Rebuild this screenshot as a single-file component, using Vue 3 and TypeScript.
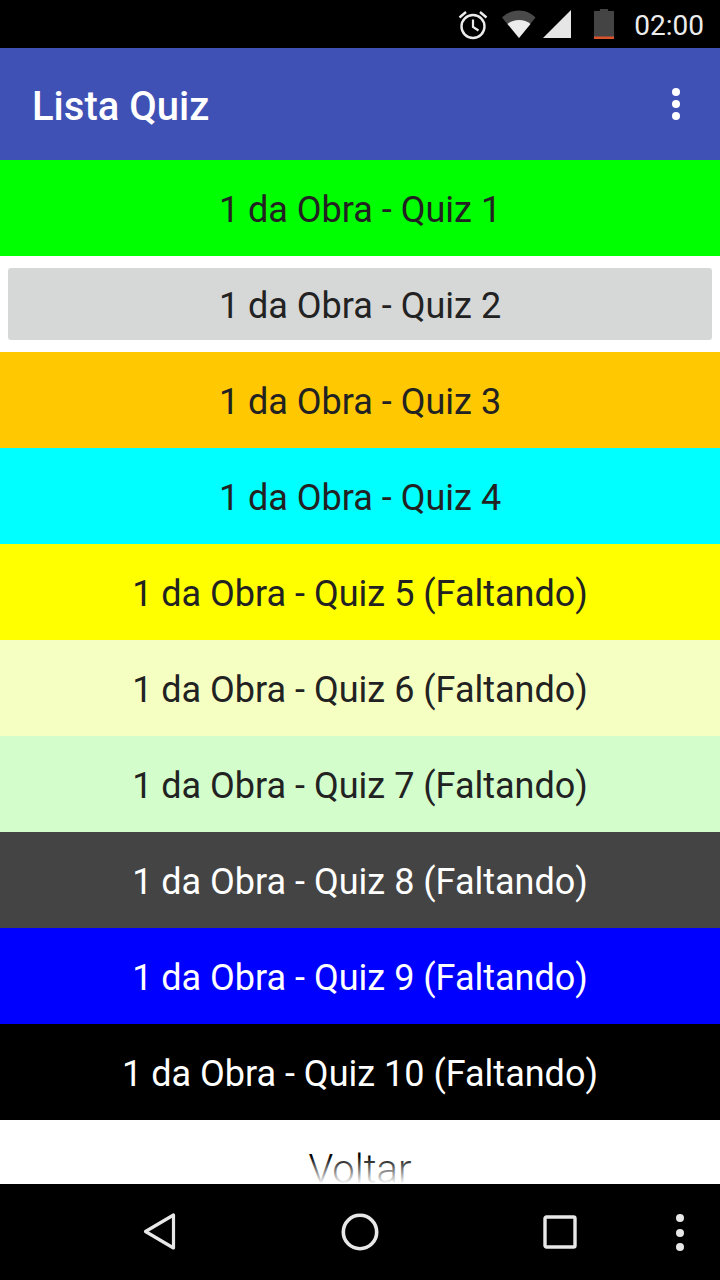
<script setup lang="ts">
interface Row { label: string; cls: string }
const rows: Row[] = [
  { label: '1 da Obra - Quiz 1', cls: 'green' },
  { label: '1 da Obra - Quiz 2', cls: 'plain' },
  { label: '1 da Obra - Quiz 3', cls: 'amber' },
  { label: '1 da Obra - Quiz 4', cls: 'cyan' },
  { label: '1 da Obra - Quiz 5 (Faltando)', cls: 'yellow' },
  { label: '1 da Obra - Quiz 6 (Faltando)', cls: 'paleyellow' },
  { label: '1 da Obra - Quiz 7 (Faltando)', cls: 'palegreen' },
  { label: '1 da Obra - Quiz 8 (Faltando)', cls: 'dark' },
  { label: '1 da Obra - Quiz 9 (Faltando)', cls: 'blue' },
  { label: '1 da Obra - Quiz 10 (Faltando)', cls: 'black' },
]
</script>

<template>
  <div class="screen">
    <header class="status">
      <svg class="st-alarm" width="32" height="32" viewBox="0 0 32 32" fill="none" stroke="#ececec">
        <circle cx="16" cy="17.5" r="11.5" stroke-width="2.4" />
        <path d="M16 10.5V18l5.5 3.5" stroke-width="2.2" />
        <path d="M2.5 8.5 9 3M29.500 8.500 23 3" stroke-width="2.4" />
      </svg>
      <svg class="st-wifi" width="36" height="28" viewBox="0 0 36 28">
        <path d="M18 28 1 7.500C5.500 3.300 11.500 0.500 18 0.500s12.500 2.800 16.500 7Z" fill="#4a4a4a" />
        <path d="M18 28 6.500 14C9.500 11.500 13.500 10 18 10s8.500 1.500 11.500 4Z" fill="#ececec" />
      </svg>
      <svg class="st-signal" width="30" height="30" viewBox="0 0 30 30">
        <path d="M1 29 29 1v28Z" fill="#e6e6e6" />
      </svg>
      <svg class="st-batt" width="20" height="30" viewBox="0 0 20 30">
        <path d="M6 0h8v2h6v28H0V2h6Z" fill="#444" />
        <rect x="0" y="27.500" width="20" height="2.500" fill="#d9532c" />
      </svg>
      <span class="clock">02:00</span>
    </header>

    <div class="appbar">
      <h1 class="title">Lista Quiz</h1>
      <div class="overflow"><i></i><i></i><i></i></div>
    </div>

    <main class="list">
      <button v-for="r in rows" :key="r.label" class="row" :class="r.cls">{{ r.label }}</button>
      <button class="row back">Voltar</button>
      <div class="fade"></div>
    </main>

    <footer class="nav">
      <svg class="nav-back" width="36" height="40" viewBox="0 0 36 40" fill="none" stroke="#e8e8e8" stroke-width="3.200" stroke-linejoin="round">
        <path d="M31.500 3V36L3.500 19.500Z" />
      </svg>
      <svg class="nav-home" width="38" height="38" viewBox="0 0 38 38" fill="none" stroke="#e8e8e8" stroke-width="3.600">
        <circle cx="19" cy="19" r="16.700" />
      </svg>
      <svg class="nav-recent" width="34" height="34" viewBox="0 0 34 34" fill="none" stroke="#e8e8e8" stroke-width="3.400" stroke-linejoin="round">
        <rect x="2" y="2" width="30" height="30" rx="1.500" />
      </svg>
      <div class="nav-more"><i></i><i></i><i></i></div>
    </footer>
  </div>
</template>

<style>
html, body { margin: 0; background: #000; }
</style>

<style scoped>
.screen {
  width: 720px;
  height: 1280px;
  display: flex;
  flex-direction: column;
  overflow: hidden;
  background: #fff;
  font-family: Roboto, "Liberation Sans", sans-serif;
}
.status {
  height: 48px;
  flex: none;
  background: #000;
  display: flex;
  align-items: center;
  justify-content: flex-end;
  padding-right: 16px;
  padding-top: 2px;
  box-sizing: border-box;
}
.st-alarm { margin-right: 12px; margin-top: -1px; }
.st-wifi { margin-right: 5px; margin-top: -2px; }
.st-signal { margin-right: 22px; margin-top: -2px; }
.st-batt { margin-right: 20px; margin-top: -2px; }
.clock { color: #ececec; font-size: 28px; line-height: 48px; margin-top: 2px; }
.appbar {
  height: 112px;
  flex: none;
  background: #3f51b5;
  display: flex;
  align-items: center;
  justify-content: space-between;
  padding: 0 40px 0 32px;
  box-sizing: border-box;
}
.title { margin: 6px 0 0; color: #fff; font-size: 40px; font-weight: 500; line-height: 100px; }
.overflow { display: flex; flex-direction: column; gap: 4px; }
.overflow i { width: 8px; height: 8px; border-radius: 50%; background: #fff; display: block; }
.list {
  position: relative;
  flex: 1;
  min-height: 0;
  overflow: hidden;
  display: flex;
  flex-direction: column;
}
.row {
  flex: none;
  height: 96px;
  width: 100%;
  border: 0;
  margin: 0;
  padding: 4px 0 0;
  font-family: inherit;
  font-size: 36px;
  color: #222;
  text-align: center;
  display: block;
}
.green { background: #00ff00; }
.plain {
  width: 704px;
  height: 72px;
  margin: 12px 8px;
  background: #d6d7d7;
  border-radius: 3px;
}
.amber { background: #ffc800; }
.cyan { background: #00ffff; }
.yellow { background: #ffff00; }
.paleyellow { background: #f6ffc2; }
.palegreen { background: #d3fdcb; }
.dark { background: #444444; color: #fff; }
.blue { background: #0000ff; color: #fff; }
.black { background: #000; color: #fff; }
.back { background: #fff; font-size: 40px; color: #000; font-weight: 300; padding: 2px 0 0; }
.fade {
  position: absolute;
  left: 0;
  right: 0;
  bottom: 0;
  height: 28px;
  background: linear-gradient(to bottom, rgba(255, 255, 255, 0), #fff);
}
.nav {
  height: 96px;
  flex: none;
  background: #000;
  position: relative;
  display: flex;
  align-items: center;
}
.nav-back { position: absolute; left: 142px; top: 28px; }
.nav-home { position: absolute; left: 341px; top: 29px; }
.nav-recent { position: absolute; left: 543px; top: 31px; }
.nav-more {
  position: absolute;
  left: 676px;
  top: 30px;
  display: flex;
  flex-direction: column;
  gap: 6.500px;
}
.nav-more i { width: 8px; height: 8px; border-radius: 50%; background: #e8e8e8; display: block; }
</style>
